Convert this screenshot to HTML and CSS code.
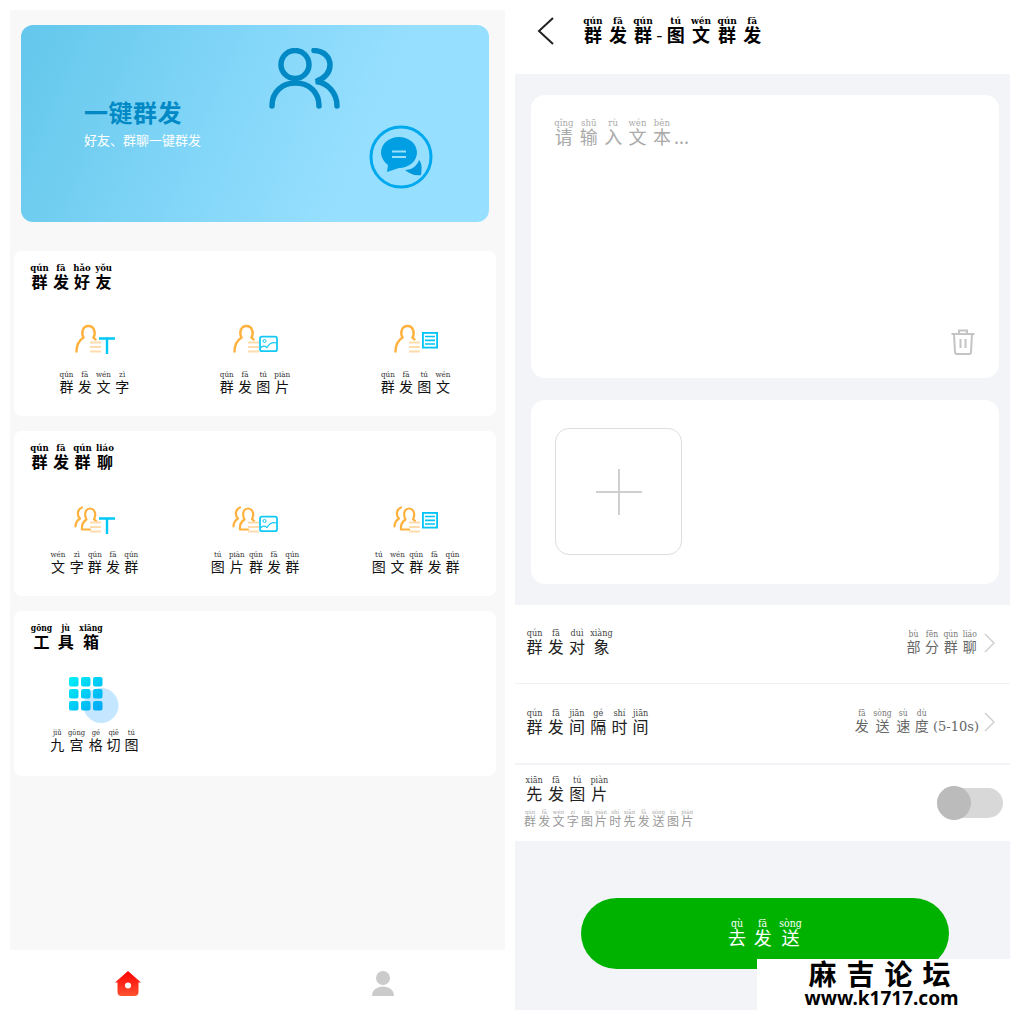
FILE: index.html
```html
<!DOCTYPE html>
<html lang="zh-CN">
<head>
<meta charset="utf-8">
<title>群发</title>
<link rel="stylesheet" href="styles.css">
</head>
<body>
<svg class="defs" width="0" height="0" aria-hidden="true">
  <defs>
    <linearGradient id="gridGrad" x1="0" y1="0" x2="1" y2="1"><stop offset="0" stop-color="#00f2f5"/><stop offset="1" stop-color="#00a6f5"/></linearGradient>
    <linearGradient id="homeGrad" x1="0" y1="0" x2="0" y2="1"><stop offset="0" stop-color="#ff0000"/><stop offset="1" stop-color="#ff5230"/></linearGradient>
    <symbol id="solo" viewBox="0 0 46 34">
      <path d="M2.500 27.500C2.500 20.500 5 16.500 9.500 13.500C7 9 8.500 2 14.500 2C20.500 2 22 9.500 19.500 13.500L21.500 15.500" fill="none" stroke="#ffb13d" stroke-width="2.400" stroke-linecap="round"/>
      <path d="M16 18.500H27M16 23H27M16 27.500H27" stroke="#ffdcae" stroke-width="2.200"/>
    </symbol>
    <symbol id="group" viewBox="0 0 46 34">
      <path d="M8 25.500C7.500 21 9.500 17.500 12.500 15.500C10 11 11 4.500 16 4.500C21 4.500 22.500 11 20 15L22 17M8 25.500H16M8 3.500C3.500 5 2.500 11 6 14.500C3 16.500 1.500 19.500 1.500 22.500" fill="none" stroke="#ffb13d" stroke-width="2.200" stroke-linecap="round" stroke-linejoin="round"/>
      <path d="M16 18.500H27M16 23H27M16 27.500H27" stroke="#ffdcae" stroke-width="2.200"/>
    </symbol>
    <symbol id="textMark" viewBox="0 0 46 34">
      <path d="M25 14.500H41M33 14.500V30" fill="none" stroke="#00c8f7" stroke-width="2.400"/>
    </symbol>
    <symbol id="imageMark" viewBox="0 0 46 34">
      <rect x="28" y="12.700" width="17" height="14.500" rx="2" fill="none" stroke="#14c9f5" stroke-width="1.800"/>
      <circle cx="32.500" cy="17" r="1.500" fill="none" stroke="#14c9f5" stroke-width="1"/>
      <path d="M28.500 24C31 21 33 22 35 23.500C37 20 40.500 18 44.500 19" fill="none" stroke="#14c9f5" stroke-width="1.200"/>
    </symbol>
    <symbol id="docMark" viewBox="0 0 46 34">
      <rect x="29" y="8" width="16" height="16.500" fill="#00c4f5"/>
      <rect x="30.800" y="9.800" width="12.400" height="12.900" fill="#fff"/>
      <path d="M32 12.500H42M32 16.300H42M32 20H42" stroke="#00c4f5" stroke-width="1.700"/>
    </symbol>
  </defs>
</svg>

<div class="screen">
  <section class="left">
    <div class="panel">
      <div class="hero">
        <div class="hero-copy">
          <h1 class="hero-title">一键群发</h1>
          <p class="hero-sub">好友、群聊一键群发</p>
        </div>
        <svg class="hero-people" width="72" height="62" viewBox="269 48 72 62" fill="none" stroke="#0089c5" stroke-width="5.500" stroke-linecap="round">
          <circle cx="295" cy="64.500" r="14"/>
          <path d="M272 106C272 92 282 83 295.500 83C309 83 319 92 319 106"/>
          <path d="M314 50.500C324 51 330 57 330 65C330 72 325 78 316 81.500C328 83 337 93 337 106"/>
        </svg>
        <svg class="hero-chat" width="66" height="64" viewBox="368 125 66 64">
          <circle cx="401" cy="157" r="30" fill="none" stroke="#00a9ee" stroke-width="3"/>
          <path d="M405 170C412 170 417 166 419 160C422 163 422 168 421 175C415 176 410 174 405 170Z" fill="#0098dc"/>
          <path d="M399 137C409 137 417 144 417 152.500C417 161 409 168 399 168L387 172L388 165C384 162 381 157 381 152.500C381 144 389 137 399 137Z" fill="#009fe3"/>
          <path d="M392 151.500H406M392 157H406" stroke="#9be0fb" stroke-width="2.200"/>
        </svg>
      </div>

      <div class="group-card">
        <h2 class="group-title"><ruby>群<rt>qún</rt></ruby><ruby>发<rt>fā</rt></ruby><ruby>好<rt>hǎo</rt></ruby><ruby>友<rt>yǒu</rt></ruby></h2>
        <div class="item-grid">
          <div class="item">
            <svg class="item-icon" width="41" height="34"><use href="#solo" width="46" height="34"/><use href="#textMark" width="46" height="34"/></svg>
            <span class="item-label"><ruby>群<rt>qún</rt></ruby><ruby>发<rt>fā</rt></ruby><ruby>文<rt>wén</rt></ruby><ruby>字<rt>zì</rt></ruby></span>
          </div>
          <div class="item">
            <svg class="item-icon" width="46" height="34"><use href="#solo"/><use href="#imageMark"/></svg>
            <span class="item-label"><ruby>群<rt>qún</rt></ruby><ruby>发<rt>fā</rt></ruby><ruby>图<rt>tú</rt></ruby><ruby>片<rt>piàn</rt></ruby></span>
          </div>
          <div class="item">
            <svg class="item-icon" width="46" height="34"><use href="#solo"/><use href="#docMark"/></svg>
            <span class="item-label"><ruby>群<rt>qún</rt></ruby><ruby>发<rt>fā</rt></ruby><ruby>图<rt>tú</rt></ruby><ruby>文<rt>wén</rt></ruby></span>
          </div>
        </div>
      </div>

      <div class="group-card">
        <h2 class="group-title"><ruby>群<rt>qún</rt></ruby><ruby>发<rt>fā</rt></ruby><ruby>群<rt>qún</rt></ruby><ruby>聊<rt>liáo</rt></ruby></h2>
        <div class="item-grid">
          <div class="item">
            <svg class="item-icon" width="41" height="34"><use href="#group" width="46" height="34"/><use href="#textMark" width="46" height="34"/></svg>
            <span class="item-label"><ruby>文<rt>wén</rt></ruby><ruby>字<rt>zì</rt></ruby><ruby>群<rt>qún</rt></ruby><ruby>发<rt>fā</rt></ruby><ruby>群<rt>qún</rt></ruby></span>
          </div>
          <div class="item">
            <svg class="item-icon" width="46" height="34"><use href="#group"/><use href="#imageMark"/></svg>
            <span class="item-label"><ruby>图<rt>tú</rt></ruby><ruby>片<rt>piàn</rt></ruby><ruby>群<rt>qún</rt></ruby><ruby>发<rt>fā</rt></ruby><ruby>群<rt>qún</rt></ruby></span>
          </div>
          <div class="item">
            <svg class="item-icon" width="46" height="34"><use href="#group"/><use href="#docMark"/></svg>
            <span class="item-label"><ruby>图<rt>tú</rt></ruby><ruby>文<rt>wén</rt></ruby><ruby>群<rt>qún</rt></ruby><ruby>发<rt>fā</rt></ruby><ruby>群<rt>qún</rt></ruby></span>
          </div>
        </div>
      </div>

      <div class="group-card tool-card">
        <h2 class="group-title"><ruby>工<rt>gōng</rt></ruby><ruby>具<rt>jù</rt></ruby><ruby>箱<rt>xiāng</rt></ruby></h2>
        <div class="item-grid">
          <div class="item">
            <svg class="item-icon" width="50" height="46" viewBox="69 677 50 46">
              <circle cx="101" cy="705.500" r="17.500" fill="#c5e6ff"/>
              <g fill="url(#gridGrad)">
                <path d="M71 677h5.500a2 2 0 0 1 2 2v5.500a2 2 0 0 1-2 2H71a2 2 0 0 1-2-2V679a2 2 0 0 1 2-2ZM83 677h5.500a2 2 0 0 1 2 2v5.500a2 2 0 0 1-2 2H83a2 2 0 0 1-2-2V679a2 2 0 0 1 2-2ZM95 677h5.500a2 2 0 0 1 2 2v5.500a2 2 0 0 1-2 2H95a2 2 0 0 1-2-2V679a2 2 0 0 1 2-2ZM71 689h5.500a2 2 0 0 1 2 2v5.500a2 2 0 0 1-2 2H71a2 2 0 0 1-2-2V691a2 2 0 0 1 2-2ZM83 689h5.500a2 2 0 0 1 2 2v5.500a2 2 0 0 1-2 2H83a2 2 0 0 1-2-2V691a2 2 0 0 1 2-2ZM95 689h5.500a2 2 0 0 1 2 2v5.500a2 2 0 0 1-2 2H95a2 2 0 0 1-2-2V691a2 2 0 0 1 2-2ZM71 701h5.500a2 2 0 0 1 2 2v5.500a2 2 0 0 1-2 2H71a2 2 0 0 1-2-2V703a2 2 0 0 1 2-2ZM83 701h5.500a2 2 0 0 1 2 2v5.500a2 2 0 0 1-2 2H83a2 2 0 0 1-2-2V703a2 2 0 0 1 2-2ZM95 701h5.500a2 2 0 0 1 2 2v5.500a2 2 0 0 1-2 2H95a2 2 0 0 1-2-2V703a2 2 0 0 1 2-2Z"/>
              </g>
            </svg>
            <span class="item-label"><ruby>九<rt>jiǔ</rt></ruby><ruby>宫<rt>gōng</rt></ruby><ruby>格<rt>gé</rt></ruby><ruby>切<rt>qiē</rt></ruby><ruby>图<rt>tú</rt></ruby></span>
          </div>
        </div>
      </div>
    </div>
    <nav class="tabbar">
      <div class="tab">
        <svg width="26" height="25" viewBox="0 0 26 25">
          <path d="M13 0L26 11.500H23.500V21C23.500 23.500 22 25 19.500 25H6.500C4 25 2.500 23.500 2.500 21V11.500H0Z" fill="url(#homeGrad)"/>
          <circle cx="13" cy="14.500" r="3" fill="#fff"/>
        </svg>
      </div>
      <div class="tab">
        <svg width="22" height="25" viewBox="0 0 22 25" fill="#cbcbcb">
          <circle cx="11" cy="7" r="7"/>
          <path d="M0 25C0 19 5 15.500 11 15.500C17 15.500 22 19 22 25Z"/>
        </svg>
      </div>
    </nav>
  </section>

  <section class="right">
    <header class="topbar">
      <svg class="back" width="18" height="30" viewBox="0 0 18 30" fill="none" stroke="#222" stroke-width="2"><path d="M16 2L2 15L16 28"/></svg>
      <h1 class="page-title"><ruby>群<rt>qún</rt></ruby><ruby>发<rt>fā</rt></ruby><ruby>群<rt>qún</rt></ruby><span class="dash">-</span><ruby>图<rt>tú</rt></ruby><ruby>文<rt>wén</rt></ruby><ruby>群<rt>qún</rt></ruby><ruby>发<rt>fā</rt></ruby></h1>
    </header>
    <div class="content">
      <div class="cards">
        <div class="card text-card">
          <p class="placeholder"><ruby>请<rt>qǐng</rt></ruby><ruby>输<rt>shū</rt></ruby><ruby>入<rt>rù</rt></ruby><ruby>文<rt>wén</rt></ruby><ruby>本<rt>běn</rt></ruby>...</p>
          <svg class="trash" width="24" height="26" viewBox="0 0 24 26" fill="none" stroke="#c4c4c4" stroke-width="2">
            <path d="M0.500 5H23.500M8 5V1.500H16V5M3 5L4 23C4 24.500 5 25 6 25H18C19 25 20 24.500 20 23L21 5M9.500 10V19M14.500 10V19"/>
          </svg>
        </div>
        <div class="card upload-card">
          <div class="upload">
            <svg width="46" height="46" viewBox="0 0 46 46" stroke="#cfcfcf" stroke-width="2"><path d="M0 23H46M23 0V46"/></svg>
          </div>
        </div>
      </div>
      <div class="settings">
        <div class="row row-line">
          <span class="row-label"><ruby>群<rt>qún</rt></ruby><ruby>发<rt>fā</rt></ruby><ruby>对<rt>duì</rt></ruby><ruby>象<rt>xiàng</rt></ruby></span>
          <span class="row-value"><span class="value-text"><ruby>部<rt>bù</rt></ruby><ruby>分<rt>fēn</rt></ruby><ruby>群<rt>qún</rt></ruby><ruby>聊<rt>liáo</rt></ruby></span>
            <svg class="chev" width="11" height="20" viewBox="0 0 11 20" fill="none" stroke="#d0d0d0" stroke-width="1.500"><path d="M1 1L10 10L1 19"/></svg></span>
        </div>
        <div class="row row-thick">
          <span class="row-label"><ruby>群<rt>qún</rt></ruby><ruby>发<rt>fā</rt></ruby><ruby>间<rt>jiān</rt></ruby><ruby>隔<rt>gé</rt></ruby><ruby>时<rt>shí</rt></ruby><ruby>间<rt>jiān</rt></ruby></span>
          <span class="row-value"><span class="value-text"><ruby>发<rt>fā</rt></ruby><ruby>送<rt>sòng</rt></ruby><ruby>速<rt>sù</rt></ruby><ruby>度<rt>dù</rt></ruby><span class="paren">(5-10s)</span></span>
            <svg class="chev" width="11" height="20" viewBox="0 0 11 20" fill="none" stroke="#d0d0d0" stroke-width="1.500"><path d="M1 1L10 10L1 19"/></svg></span>
        </div>
        <div class="row row-switch">
          <div class="switch-copy">
            <span class="row-label"><ruby>先<rt>xiān</rt></ruby><ruby>发<rt>fā</rt></ruby><ruby>图<rt>tú</rt></ruby><ruby>片<rt>piàn</rt></ruby></span>
            <span class="row-note"><ruby>群<rt>qún</rt></ruby><ruby>发<rt>fā</rt></ruby><ruby>文<rt>wén</rt></ruby><ruby>字<rt>zì</rt></ruby><ruby>图<rt>tú</rt></ruby><ruby>片<rt>piàn</rt></ruby><ruby>时<rt>shí</rt></ruby><ruby>先<rt>xiān</rt></ruby><ruby>发<rt>fā</rt></ruby><ruby>送<rt>sòng</rt></ruby><ruby>图<rt>tú</rt></ruby><ruby>片<rt>piàn</rt></ruby></span>
          </div>
          <div class="switch"><span class="knob"></span></div>
        </div>
      </div>
      <button class="send" type="button"><ruby>去<rt>qù</rt></ruby><ruby>发<rt>fā</rt></ruby><ruby>送<rt>sòng</rt></ruby></button>
    </div>
    <div class="watermark">
      <div class="wm-name">麻吉论坛</div>
      <div class="wm-url">www.k1717.com</div>
    </div>
  </section>
</div>
</body>
</html>
```
FILE: styles.css
```css
* { box-sizing: border-box; }
html, body { margin: 0; padding: 0; background: #fff; }
body { width: 1020px; height: 1020px; overflow: hidden; font-family: "Noto Sans CJK SC", "Liberation Sans", sans-serif; color: #111; }
.defs { position: absolute; }
h1, h2, p { margin: 0; font-weight: normal; }
svg { display: block; flex: none; }
ruby { ruby-position: over; }
rt { font-family: "DejaVu Serif Condensed", "DejaVu Serif", "Liberation Serif", serif; font-stretch: condensed; line-height: 1; text-align: center; }

.screen { display: flex; width: 1020px; height: 1020px; }
.left { width: 510px; padding-top: 10px; flex: none; }
.panel { width: 495px; height: 940px; margin-left: 10px; padding: 15px 9px 0 4px; background: #f8f8f8; display: flex; flex-direction: column; gap: 15px; }

.hero { position: relative; height: 197px; margin: 0 7px 14px; border-radius: 12px; background: linear-gradient(113deg, #63c7eb 0%, #82d6f8 42%, #97dfff 72%); padding: 73px 0 0 63px; }
.hero-title { font-size: 24px; line-height: 28px; font-weight: 700; color: #0089c5; letter-spacing: 0.5px; }
.hero-sub { font-size: 13px; line-height: 18px; color: #fff; margin-top: 5px; }
.hero-people { position: absolute; left: 248px; top: 23px; }
.hero-chat { position: absolute; left: 347px; top: 100px; }

.group-card { height: 165px; background: #fff; border-radius: 8px; padding: 12px 0 0; }
.group-title { padding-left: 14px; font-size: 16px; font-weight: 700; line-height: 20px; color: #000; height: 28px; }
.group-title ruby { margin: 0 2.200px; }
.group-title rt { font-size: 9.500px; font-weight: 700; }
.item-grid { display: grid; grid-template-columns: repeat(3, 1fr); margin-top: 33px; }
.item { display: flex; flex-direction: column; align-items: center; height: 90px; position: relative; }
.item-icon { height: 34px; }
.item-label { font-size: 14px; line-height: 16px; margin-top: 12px; color: #111; white-space: nowrap; }
.item-label ruby { margin: 0 2.100px; }
.item-label rt { font-size: 8px; color: #333; }
.tool-card { padding-top: 13px; }
.tool-card .group-title ruby { margin: 0 2.800px; }
.tool-card .group-title rt { font-size: 8.500px; }
.tool-card .item-grid { margin-top: 25px; }
.tool-card .item-icon { height: 46px; }
.tool-card .item-label { margin-top: 6px; }
.tool-card .item-label ruby { margin: 0 1.900px; }
.tool-card .item-label rt { font-size: 7.500px; }

.tabbar { display: flex; width: 510px; height: 60px; padding-top: 21px; }
.tab { flex: 1; display: flex; justify-content: center; }

.right { position: relative; width: 495px; margin-left: 5px; flex: none; }
.topbar { height: 74px; display: flex; align-items: flex-start; background: #fff; padding: 16px 0 0 22px; gap: 25px; }
.page-title { font-size: 18px; line-height: 22px; font-weight: 700; color: #000; white-space: nowrap; }
.page-title ruby { margin: 0 3.200px; }
.page-title rt { font-size: 10px; font-weight: 700; }
.dash { margin: 0 1px; font-weight: 400; }

.content { height: 936px; background: #f3f4f8; display: flex; flex-direction: column; }
.cards { padding: 21px 11px 21px 16px; display: flex; flex-direction: column; gap: 22px; }
.card { background: #fff; border-radius: 14px; }
.text-card { height: 283px; padding: 23px 24px 23px 20px; display: flex; flex-direction: column; justify-content: space-between; align-items: flex-start; }
.placeholder { font-size: 18px; line-height: 22px; color: #a9a9a9; white-space: nowrap; }
.placeholder ruby { margin: 0 3.200px; }
.placeholder rt { font-size: 9.500px; }
.trash { align-self: flex-end; }
.upload-card { height: 184px; padding: 28px 24px; }
.upload { width: 127px; height: 127px; border: 1px solid #dedede; border-radius: 14px; display: flex; align-items: center; justify-content: center; }

.settings { background: #fff; height: 236px; display: flex; flex-direction: column; }
.row { display: flex; justify-content: space-between; align-items: center; padding: 0 15px 0 9px; }
.row-line { height: 79px; border-bottom: 1px solid #f1f1f4; padding-bottom: 3px; }
.row-thick { height: 81px; border-bottom: 2px solid #f3f4f8; padding-bottom: 3px; }
.row-switch { flex: 1; padding: 0 7px 0 8px; }
.row-label { font-size: 16px; line-height: 20px; color: #222; white-space: nowrap; }
.row-label ruby { margin: 0 2.600px; }
.row-label rt { font-size: 9px; color: #444; }
.row-value { display: flex; align-items: center; gap: 5px; }
.value-text { font-size: 14px; line-height: 18px; color: #666; white-space: nowrap; }
.value-text ruby { margin: 0 2.250px; }
.value-text rt { font-size: 8.500px; color: #777; }
.paren { font-family: "DejaVu Serif", serif; font-size: 13px; margin-left: 2px; }
.switch-copy { display: flex; flex-direction: column; gap: 6px; margin-top: -3px; }
.row-note { font-size: 12px; line-height: 14px; color: #999; white-space: nowrap; }
.row-note ruby { margin: 0 1.100px; }
.row-note rt { font-size: 6px; color: #aaa; }
.switch { position: relative; width: 66px; height: 30px; border-radius: 15px; background: #d8d8d8; }
.knob { position: absolute; left: 0; top: -2px; width: 34px; height: 34px; border-radius: 50%; background: #bbb; }

.send { align-self: flex-start; width: 368px; height: 71px; margin: 57px 0 0 66px; border: 0; border-radius: 36px; background: #00b200; color: #fff; font-family: inherit; font-size: 18px; line-height: 22px; padding: 0; }
.send ruby { margin: 0 3.800px; }
.send rt { font-size: 10.500px; }

.watermark { position: absolute; left: 242px; top: 959px; width: 253px; height: 51px; background: #fff; text-align: center; color: #000; font-weight: 700; padding-right: 4px; }
.wm-name { font-size: 28px; line-height: 28px; letter-spacing: 10px; margin-left: 6px; }
.wm-url { font-size: 19px; line-height: 22px; font-family: "Noto Sans", "Open Sans", sans-serif; }
```
